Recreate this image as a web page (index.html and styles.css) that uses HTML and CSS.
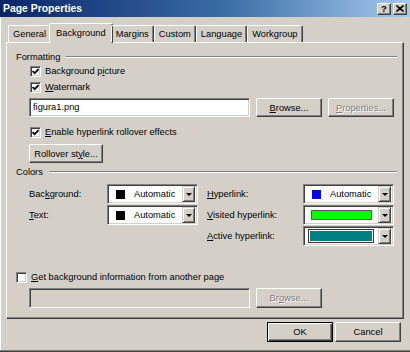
FILE: index.html
```html
<!DOCTYPE html>
<html lang="en">
<head>
  <meta charset="UTF-8">
  <title>Page Properties</title>
  <link rel="stylesheet" href="styles.css">
</head>
<body>

  <div class="window">
    <div class="titlebar">
      <span class="title">Page Properties</span>
      <div class="caption-btns">
        <span class="cbtn help">?</span>
        <span class="cbtn">
          <svg width="8" height="7" viewBox="0 0 8 7"><path d="M0.5 0.5 L7.5 6.5 M7.5 0.5 L0.5 6.5" stroke="#000" stroke-width="1.6"/></svg>
        </span>
      </div>
    </div>

    <div class="tabs">
      <span class="tab">General</span>
      <span class="tab active">Background</span>
      <span class="tab">Margins</span>
      <span class="tab">Custom</span>
      <span class="tab">Language</span>
      <span class="tab">Workgroup</span>
    </div>

    <div class="panel">
      <div class="group-head">Formatting</div>

      <label class="check indent">
        <span class="box"><svg width="7" height="7" viewBox="0 0 7 7"><path d="M0.5 3 L2.6 5.2 L6.6 1" fill="none" stroke="#000" stroke-width="1.8"/></svg></span>
        <span>Background p<u>i</u>cture</span>
      </label>
      <label class="check indent">
        <span class="box"><svg width="7" height="7" viewBox="0 0 7 7"><path d="M0.5 3 L2.6 5.2 L6.6 1" fill="none" stroke="#000" stroke-width="1.8"/></svg></span>
        <span><u>W</u>atermark</span>
      </label>

      <div class="file-row">
        <div class="field file-input">figura1.png</div>
        <button class="btn browse"><u>B</u>rowse...</button>
        <button class="btn props disabled"><u>P</u>roperties...</button>
      </div>

      <label class="check indent rollover-check">
        <span class="box"><svg width="7" height="7" viewBox="0 0 7 7"><path d="M0.5 3 L2.6 5.2 L6.6 1" fill="none" stroke="#000" stroke-width="1.8"/></svg></span>
        <span><u>E</u>nable hyperlink rollover effects</span>
      </label>

      <button class="btn rollover">Rollover st<u>y</u>le...</button>

      <div class="group-head colors-head">Colors</div>

      <div class="color-grid">
        <span class="clabel">Bac<u>k</u>ground:</span>
        <div class="field combo">
          <span class="swatch" style="background:#000"></span>
          <span class="ctext">Automatic</span>
          <span class="drop"><i></i></span>
        </div>
        <span class="clabel right"><u>H</u>yperlink:</span>
        <div class="field combo">
          <span class="swatch" style="background:#0000ff"></span>
          <span class="ctext">Automatic</span>
          <span class="drop"><i></i></span>
        </div>

        <span class="clabel"><u>T</u>ext:</span>
        <div class="field combo">
          <span class="swatch" style="background:#000"></span>
          <span class="ctext">Automatic</span>
          <span class="drop"><i></i></span>
        </div>
        <span class="clabel right"><u>V</u>isited hyperlink:</span>
        <div class="field combo">
          <span class="bar" style="background:#00ff00"></span>
          <span class="drop"><i></i></span>
        </div>

        <span></span>
        <span></span>
        <span class="clabel right"><u>A</u>ctive hyperlink:</span>
        <div class="field combo">
          <span class="bar focused" style="background:#008080"></span>
          <span class="drop"><i></i></span>
        </div>
      </div>

      <label class="check other-page">
        <span class="box"></span>
        <span><u>G</u>et background information from another page</span>
      </label>

      <div class="file-row other-row">
        <div class="field file-input off"></div>
        <button class="btn browse disabled">Br<u>o</u>wse...</button>
      </div>
    </div>

    <div class="footer">
      <button class="btn ok">OK</button>
      <button class="btn cancel">Cancel</button>
    </div>
  </div>

</body>
</html>
```

FILE: styles.css
```css
body {
  margin: 0;
  background: #d4d0c8;
  font-family: "Liberation Sans", Arial, sans-serif;
  font-size: 9.3px;
  color: #000;
}

.window {
  width: 410px;
  height: 352px;
  box-sizing: border-box;
  display: flex;
  flex-direction: column;
  background: #d4d0c8;
  border-bottom: 1px solid #404040;
  box-shadow: inset 0 -1px #808080, inset 1px 0 #fff;
}

/* title bar */
.titlebar {
  height: 17px;
  flex: none;
  display: flex;
  align-items: center;
  justify-content: space-between;
  padding: 0 3px 0 3px;
  background: linear-gradient(to right, #0a246a, #3a6ea5 55%, #a6caf0);
}

.title {
  color: #fff;
  font-weight: bold;
  font-size: 10.4px;
}

.caption-btns {
  display: flex;
  gap: 2px;
}

.cbtn {
  width: 14px;
  height: 12px;
  box-sizing: border-box;
  display: flex;
  align-items: center;
  justify-content: center;
  background: #d4d0c8;
  border: 1px solid;
  border-color: #fff #404040 #404040 #fff;
  box-shadow: inset -1px -1px #808080;
}

.cbtn.help {
  font-weight: bold;
  font-size: 9.5px;
  line-height: 1;
}

/* tabs */
.tabs {
  display: flex;
  align-items: flex-end;
  height: 19px;
  flex: none;
  margin-top: 6px;
  padding-left: 8px;
  position: relative;
  z-index: 1;
}

.tab {
  height: 17px;
  box-sizing: border-box;
  display: flex;
  align-items: center;
  padding: 0 4px;
  border: 1px solid;
  border-color: #fff #404040 transparent #fff;
  border-bottom: none;
  border-radius: 2px 2px 0 0;
  box-shadow: inset -1px 0 #808080;
}

.tab.active {
  height: 20px;
  margin: 0 -2px -1px;
  padding: 0 6px 1px 6px;
  background: #d4d0c8;
}

/* tab page */
.panel {
  flex: 1;
  margin: 0 6px 0 6px;
  padding: 8px 6px 0 9px;
  border: 1px solid;
  border-color: #fff #404040 #404040 #fff;
  box-shadow: inset -1px -1px #808080;
  display: flex;
  flex-direction: column;
  align-items: flex-start;
}

.group-head {
  display: flex;
  align-items: center;
  align-self: stretch;
  height: 12px;
}

.group-head::after {
  content: "";
  flex: 1;
  margin-left: 6px;
  border-top: 1px solid #808080;
  border-bottom: 1px solid #fff;
}

.check {
  display: flex;
  align-items: center;
  height: 16px;
  gap: 4px;
}

.check.indent {
  margin-left: 14px;
}

.box {
  width: 11px;
  height: 11px;
  box-sizing: border-box;
  display: flex;
  align-items: center;
  justify-content: center;
  background: #fff;
  border: 1px solid;
  border-color: #808080 #fff #fff #808080;
  box-shadow: inset 1px 1px #404040, inset -1px -1px #d4d0c8;
}

.field {
  background: #fff;
  box-sizing: border-box;
  border: 1px solid;
  border-color: #808080 #fff #fff #808080;
  box-shadow: inset 1px 1px #404040, inset -1px -1px #d4d0c8;
}

.btn {
  font: inherit;
  color: #000;
  height: 19px;
  padding: 0;
  box-sizing: border-box;
  background: #d4d0c8;
  border: 1px solid;
  border-color: #fff #404040 #404040 #fff;
  box-shadow: inset -1px -1px #808080;
}

.btn.disabled {
  color: #808080;
  text-shadow: 1px 1px #fff;
}

.file-row {
  display: flex;
  align-items: flex-start;
  margin: 3px 0 0 13px;
}

.file-input {
  width: 221px;
  height: 19px;
  padding: 3px 0 0 3px;
}

.file-input.off {
  background: #d4d0c8;
  height: 20px;
}

.browse {
  width: 66px;
  margin-left: 6px;
}

.props {
  width: 66px;
  margin-left: 6px;
}

.rollover-check {
  margin-top: 7px;
}

.rollover {
  width: 74px;
  margin: 4px 0 0 13px;
}

.colors-head {
  margin-top: 3px;
}

/* colors */
.color-grid {
  display: grid;
  grid-template-columns: 78px 91px 105px 91px;
  grid-auto-rows: 20px;
  row-gap: 1px;
  margin: 6px 0 0 13px;
  align-items: center;
}

.clabel.right {
  padding-left: 9px;
}

.combo {
  height: 20px;
  display: flex;
  align-items: center;
  padding: 2px 2px 2px 8px;
}

.swatch {
  width: 9px;
  height: 9px;
  flex: none;
}

.ctext {
  flex: 1;
  margin-left: 9px;
}

.bar {
  flex: 1;
  height: 10px;
  margin-left: -1px;
  margin-right: 6px;
  box-sizing: border-box;
  border: 1px solid #5a5a5a;
}

.bar.focused {
  height: 14px;
  margin-left: -4px;
  margin-right: 4px;
  border: 1px solid #4b2b2b;
  box-shadow: inset 0 0 0 1px #fff;
}

.drop {
  width: 13px;
  height: 16px;
  flex: none;
  box-sizing: border-box;
  display: flex;
  align-items: center;
  justify-content: center;
  background: #d4d0c8;
  border: 1px solid;
  border-color: #d4d0c8 #404040 #404040 #d4d0c8;
  box-shadow: inset 1px 1px #fff, inset -1px -1px #808080;
}

.drop i {
  width: 0;
  height: 0;
  border-left: 3px solid transparent;
  border-right: 3px solid transparent;
  border-top: 3px solid #000;
}

.other-page {
  margin-top: 23px;
}

.other-row {
  margin-top: 3px;
}

.other-row .browse {
  height: 20px;
}

/* dialog buttons */
.footer {
  height: 32px;
  flex: none;
  display: flex;
  justify-content: flex-end;
  align-items: flex-start;
  gap: 2px;
  padding: 3px 9px 0 0;
  box-sizing: border-box;
}

.ok, .cancel {
  width: 66px;
  height: 20px;
}

.ok {
  border: 1px solid #000;
  box-shadow: inset 1px 1px #fff, inset -1px -1px #404040, inset -2px -2px #808080;
}
```
